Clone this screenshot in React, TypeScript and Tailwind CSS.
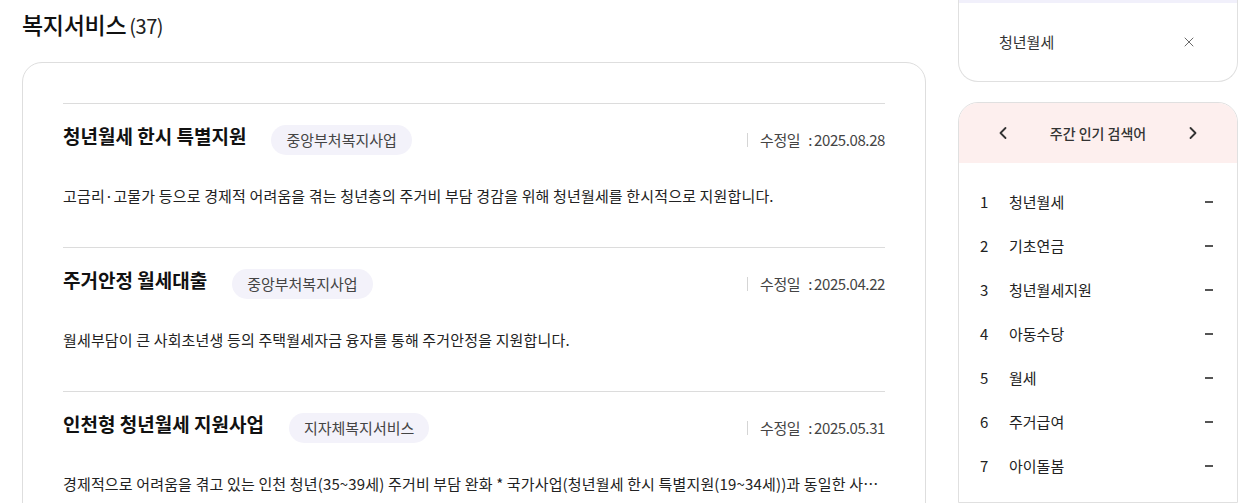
import React from 'react';
import { ChevronLeft, ChevronRight, X } from 'lucide-react';

const services = [
  {
    title: '청년월세 한시 특별지원',
    tag: '중앙부처복지사업',
    date: '2025.08.28',
    desc: '고금리·고물가 등으로 경제적 어려움을 겪는 청년층의 주거비 부담 경감을 위해 청년월세를 한시적으로 지원합니다.',
  },
  {
    title: '주거안정 월세대출',
    tag: '중앙부처복지사업',
    date: '2025.04.22',
    desc: '월세부담이 큰 사회초년생 등의 주택월세자금 융자를 통해 주거안정을 지원합니다.',
  },
  {
    title: '인천형 청년월세 지원사업',
    tag: '지자체복지서비스',
    date: '2025.05.31',
    desc: '경제적으로 어려움을 겪고 있는 인천 청년(35~39세) 주거비 부담 완화 * 국가사업(청년월세 한시 특별지원(19~34세))과 동일한 사업으로 대상 연령만 확대 지원',
  },
];

const keywords = ['청년월세', '기초연금', '청년월세지원', '아동수당', '월세', '주거급여', '아이돌봄', '장애인연금'];

export default function App() {
  return (
    <div className="w-[1252px] h-[503px] overflow-hidden bg-white flex gap-[32px] pl-[22px] font-['Noto_Sans_CJK_KR','Noto_Sans',sans-serif] text-[#222]">
      <main className="w-[904px] shrink-0">
        <h2 className="h-[56px] pt-[9px] flex items-baseline gap-[3px]">
          <span className="text-[23px] font-medium leading-[30px] text-[#111] tracking-[-0.3px]">복지서비스</span>
          <span className="text-[20px] leading-[30px] text-[#222] tracking-[-0.5px]">(37)</span>
        </h2>
        <div className="mt-[6px] border border-[#dedede] rounded-[20px] px-[40px] pt-[40px] h-[600px]">
          {services.map((s) => (
            <div key={s.title} className="border-t border-[#dcdcdc] h-[144px]">
              <div className="flex items-center h-[70px] pt-[2px]">
                <h3 className="text-[19px] font-bold text-[#111] leading-[26px] -mt-[8px]">{s.title}</h3>
                <span className="ml-[25px] h-[30px] px-[15px] rounded-full bg-[#f3f2fa] text-[15px] text-[#444] leading-[30px]">
                  {s.tag}
                </span>
                <div className="ml-auto flex items-center text-[15px] text-[#444] tracking-[-0.4px]">
                  <span className="w-px h-[14px] bg-[#d5d5d5] mr-[12px]" />
                  <span>수정일</span>
                  <span className="ml-[8px] mr-[2px]">:</span>
                  <span>{s.date}</span>
                </div>
              </div>
              <p className="mt-[10px] text-[15px] text-[#222] leading-[24px] tracking-[0.15px] truncate">{s.desc}</p>
            </div>
          ))}
        </div>
      </main>

      <aside className="w-[280px] shrink-0 flex flex-col gap-[20px]">
        <div className="border-x border-b border-[#e0e0e0] rounded-b-[20px] h-[82px]">
          <div className="h-[3px] bg-[#f1f0fb]" />
          <div className="flex items-center justify-between pl-[40px] pr-[40px] h-[78px]">
            <span className="text-[15px] text-[#333]">청년월세</span>
            <X size={16} strokeWidth={1.2} className="text-[#444]" />
          </div>
        </div>

        <div className="border border-[#e0e0e0] rounded-t-[20px] overflow-hidden h-[420px]">
          <div className="h-[60px] bg-[#fdefee] flex items-center justify-between px-[34px]">
            <ChevronLeft size={20} strokeWidth={2.2} className="text-[#333]" />
            <span className="text-[14px] text-[#333] font-medium">주간 인기 검색어</span>
            <ChevronRight size={20} strokeWidth={2.2} className="text-[#333]" />
          </div>
          <ul className="pt-[17px] pl-[21px] pr-[24px]">
            {keywords.map((k, i) => (
              <li key={k} className="h-[44px] flex items-center text-[15px] text-[#222]">
                <span className="w-[29px]">{i + 1}</span>
                <span>{k}</span>
                <span className="ml-auto w-[8px] h-[2px] bg-[#555]" />
              </li>
            ))}
          </ul>
        </div>
      </aside>
    </div>
  );
}
